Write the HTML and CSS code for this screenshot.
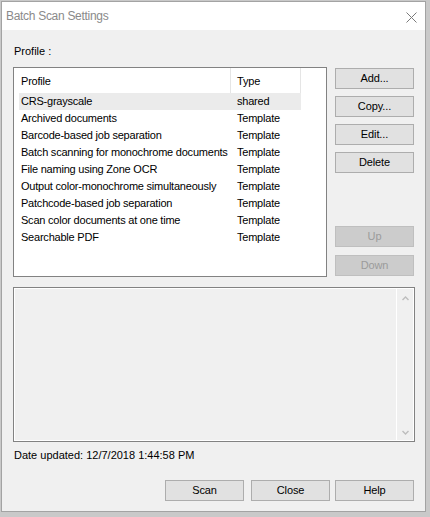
FILE: index.html
```html
<!DOCTYPE html>
<html>
<head>
<meta charset="utf-8">
<title>Batch Scan Settings</title>
<link rel="stylesheet" href="styles.css">
</head>
<body>
<div class="window">
  <div class="titlebar">
    <span class="title">Batch Scan Settings</span>
    <svg class="close" width="11" height="11" viewBox="0 0 11 11"><path d="M0.5 0.5L10.5 10.5M10.5 0.5L0.5 10.5" stroke="#7a7a7a" stroke-width="1" fill="none"/></svg>
  </div>
  <div class="client">
    <div class="label">Profile :</div>
    <div class="top">
      <div class="list">
        <div class="header">
          <div class="hcell c1">Profile</div>
          <div class="hcell c2">Type</div>
        </div>
        <div class="rows">
          <div class="row sel"><span class="r1">CRS-grayscale</span><span class="r2">shared</span></div>
          <div class="row"><span class="r1">Archived documents</span><span class="r2">Template</span></div>
          <div class="row"><span class="r1">Barcode-based job separation</span><span class="r2">Template</span></div>
          <div class="row"><span class="r1">Batch scanning for monochrome documents</span><span class="r2">Template</span></div>
          <div class="row"><span class="r1">File naming using Zone OCR</span><span class="r2">Template</span></div>
          <div class="row"><span class="r1">Output color-monochrome simultaneously</span><span class="r2">Template</span></div>
          <div class="row"><span class="r1">Patchcode-based job separation</span><span class="r2">Template</span></div>
          <div class="row"><span class="r1">Scan color documents at one time</span><span class="r2">Template</span></div>
          <div class="row"><span class="r1">Searchable PDF</span><span class="r2">Template</span></div>
        </div>
      </div>
      <div class="side">
        <button class="btn">Add...</button>
        <button class="btn gap">Copy...</button>
        <button class="btn gap">Edit...</button>
        <button class="btn gap">Delete</button>
        <button class="btn dis up" disabled>Up</button>
        <button class="btn dis down" disabled>Down</button>
      </div>
    </div>
    <div class="log">
      <div class="logarea"></div>
      <div class="scroll">
        <svg width="7" height="5" viewBox="0 0 7 5"><polyline points="0.5,4 3.5,1 6.5,4" stroke="#bdbdbd" stroke-width="1.4" fill="none"/></svg>
        <svg width="7" height="5" viewBox="0 0 7 5"><polyline points="0.5,1 3.5,4 6.5,1" stroke="#bdbdbd" stroke-width="1.4" fill="none"/></svg>
      </div>
    </div>
    <div class="date">Date updated: 12/7/2018 1:44:58 PM</div>
    <div class="footer">
      <button class="btn scan">Scan</button>
      <button class="btn closeb">Close</button>
      <button class="btn help">Help</button>
    </div>
  </div>
</div>
</body>
</html>
```

FILE: styles.css
```css
* { box-sizing: border-box; }
html, body { margin: 0; padding: 0; }
body {
  background: #c9c9c9;
  padding: 1px 0 0 1px;
  width: 430px;
  height: 517px;
  overflow: hidden;
  font-family: "Liberation Sans", Arial, sans-serif;
  font-size: 11px;
  color: #000;
}
.window {
  width: 425px;
  height: 511px;
  border: 1px solid #a3a3a3;
  background: #f0f0f0;
}
.titlebar {
  height: 28px;
  background: #fff;
  display: flex;
  align-items: flex-start;
  justify-content: space-between;
  padding: 0 8px 0 4px;
}
.title {
  font-size: 12px;
  line-height: 28px;
  letter-spacing: -0.3px;
  color: #8a8a8a;
}
.close { margin-top: 10px; display: block; }
.client {
  height: 481px;
  padding: 15px 0 0 11px;
}
.label {
  line-height: 13px;
  padding-left: 1px;
}
.top {
  display: flex;
  margin-top: 9px;
}
.list {
  width: 314px;
  height: 210px;
  border: 1px solid #828282;
  background: #fff;
}
.header {
  display: flex;
  height: 25px;
}
.hcell {
  height: 25px;
  padding-top: 1px;
  line-height: 24px;
  border-right: 1px solid #e5e5e5;
  letter-spacing: -0.2px;
}
.hcell.c1 { width: 217px; padding-left: 7px; }
.hcell.c2 { width: 70px; padding-left: 6px; }
.rows { padding-left: 5px; }
.row {
  display: flex;
  width: 282px;
  height: 17px;
  line-height: 17px;
  letter-spacing: -0.22px;
  white-space: nowrap;
}
.row.sel { background: #ebebeb; }
.r1 { width: 212px; padding-left: 2px; overflow: hidden; }
.r2 { padding-left: 6px; }
.side {
  display: flex;
  flex-direction: column;
  margin-left: 8px;
  padding-top: 1px;
}
.btn {
  width: 79px;
  height: 21px;
  padding: 0;
  margin: 0;
  border: 1px solid #adadad;
  background: #e1e1e1;
  font-family: "Liberation Sans", Arial, sans-serif;
  font-size: 11px;
  line-height: 19px;
  color: #000;
  text-align: center;
  letter-spacing: -0.1px;
}
.btn.gap { margin-top: 7px; }
.btn.dis {
  background: #cccccc;
  border-color: #bfbfbf;
  color: #9b9b9b;
}
.btn.up { margin-top: 53px; }
.btn.down { margin-top: 8px; }
.log {
  margin-top: 10px;
  width: 402px;
  height: 155px;
  border: 1px solid #828282;
  box-shadow: inset 0 0 0 1px #fff;
  background: #f0f0f0;
  display: flex;
}
.logarea { flex: 1; }
.scroll {
  width: 17px;
  margin: 1px 1px 1px 0;
  border-left: 1px solid #fff;
  display: flex;
  flex-direction: column;
  justify-content: space-between;
  align-items: center;
  padding: 7px 0 5px;
}
.scroll svg { display: block; }
.date {
  margin-top: 7px;
  line-height: 13px;
  padding-left: 1px;
}
.footer {
  display: flex;
  margin-top: 18px;
}
.btn.scan { margin-left: 152px; }
.btn.closeb { margin-left: 7px; }
.btn.help { margin-left: 5px; }
```
